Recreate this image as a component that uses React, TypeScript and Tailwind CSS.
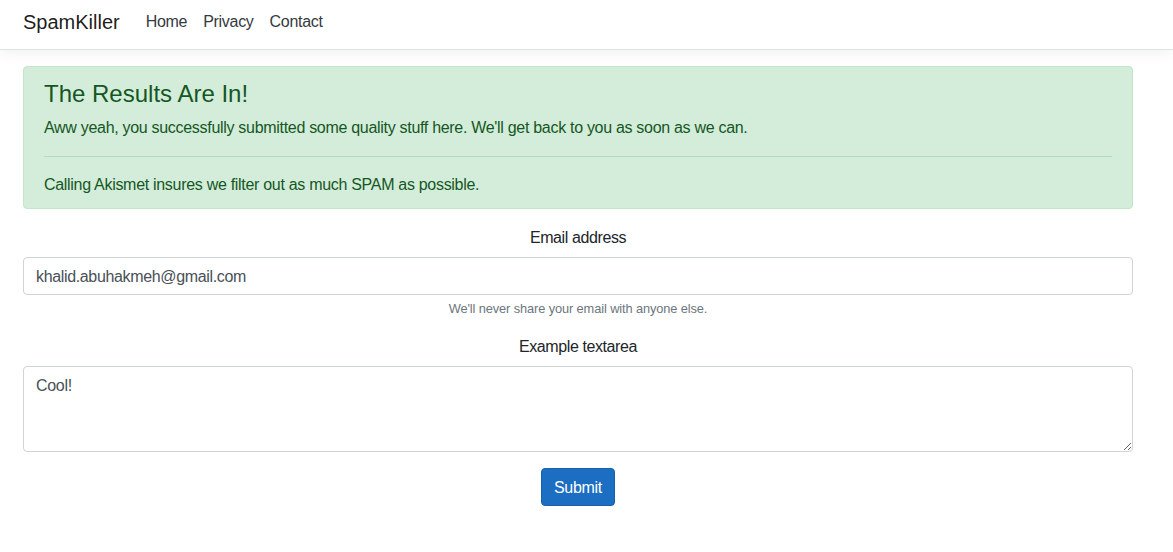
export default function App() {
    return (
        <div className="min-h-[552px] bg-white font-['Liberation_Sans',Arial,sans-serif] text-[16px] leading-[1.5] tracking-[-0.3px] text-[#212529]">
            <header className="h-[50px] border-b border-[#dee2e6] bg-white shadow-[0_4px_12px_rgba(0,0,0,0.05)]">
                <div className="w-[1156px]">
                    <nav className="mx-auto flex h-[44px] max-w-[1140px] items-center px-[15px]">
                        <span className="mr-[18px] text-[20px] leading-[30px] tracking-normal text-[rgba(0,0,0,0.9)]">SpamKiller</span>
                        <ul className="flex">
                            {['Home', 'Privacy', 'Contact'].map((l) => (
                                <li key={l} className="px-[8px] text-[#343a40]">
                                    {l}
                                </li>
                            ))}
                        </ul>
                    </nav>
                </div>
            </header>
            <main className="mt-[16px] w-[1156px]">
                <div className="mx-auto max-w-[1140px] px-[15px]">
                    <div className="mb-[16px] rounded-[4px] border border-[#c3e6cb] bg-[#d4edda] px-[20px] pt-[13px] pb-[11px] text-[#155724]">
                        <h4 className="mb-[8px] text-[24px] leading-[28px] font-medium tracking-normal">The Results Are In!</h4>
                        <p>Aww yeah, you successfully submitted some quality stuff here. We'll get back to you as soon as we can.</p>
                        <hr className="my-[16px] border-0 border-t border-[#b1dfbb]" />
                        <p>Calling Akismet insures we filter out as much SPAM as possible.</p>
                    </div>
                    <form className="text-center" onSubmit={(e) => e.preventDefault()}>
                        <div className="mb-[16px]">
                            <label className="mb-[8px] block pt-px leading-[23px] tracking-[-0.4px]">Email address</label>
                            <input
                                type="email"
                                readOnly
                                value="khalid.abuhakmeh@gmail.com"
                                className="block h-[38px] w-full rounded-[4px] border border-[#ced4da] bg-white px-[12px] pt-[7px] pb-[5px] text-left tracking-[-0.35px] text-[#495057] outline-none"
                            />
                            <small className="mt-[4px] block text-[12.8px] leading-[19.2px] tracking-[-0.1px] text-[#6c757d]">
                                We'll never share your email with anyone else.
                            </small>
                        </div>
                        <div className="mb-[16px]">
                            <label className="mb-[8px] block pt-px leading-[23px] tracking-[-0.4px]">Example textarea</label>
                            <textarea
                                rows={3}
                                readOnly
                                value="Cool!"
                                className="block h-[86px] w-full rounded-[4px] border border-[#ced4da] bg-white px-[12px] pt-[7px] pb-[5px] text-left text-[#495057] outline-none"
                            />
                        </div>
                        <button
                            type="submit"
                            className="h-[38px] rounded-[4px] border border-[#1861ac] bg-[#1b6ec2] px-[12px] pt-[7px] pb-[5px] text-white"
                        >
                            Submit
                        </button>
                    </form>
                </div>
            </main>
        </div>
    );
}
